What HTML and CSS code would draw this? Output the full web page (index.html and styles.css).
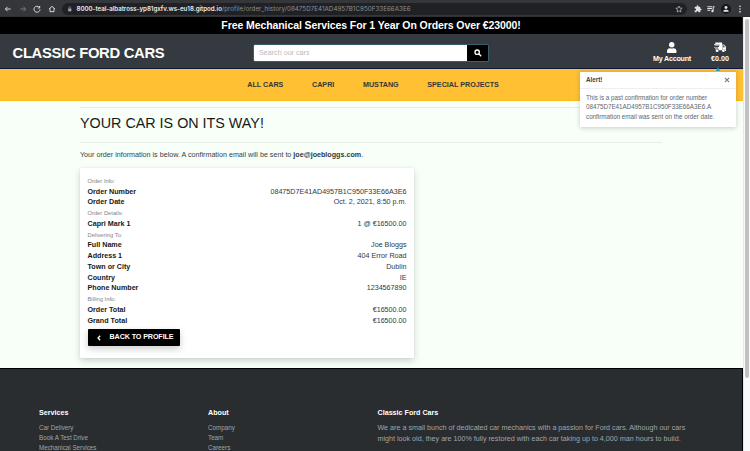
FILE: index.html
```html
<!DOCTYPE html>
<html lang="en">
<head>
<meta charset="utf-8">
<title>Classic Ford Cars</title>
<link rel="stylesheet" href="styles.css">
</head>
<body>
<div class="chrome">
  <svg class="ic" viewBox="0 0 24 24"><path d="M20 12H5M11 5l-7 7 7 7"/></svg>
  <svg class="ic dim" viewBox="0 0 24 24"><path d="M4 12h15M13 5l7 7-7 7"/></svg>
  <svg class="ic" viewBox="0 0 24 24"><path d="M19 7a9 9 0 1 0 2 6M20 3v6h-6"/></svg>
  <svg class="ic" viewBox="0 0 24 24"><path d="M3 12l9-8 9 8M6 10v10h12V10"/></svg>
  <div class="omni">
    <svg class="lock" viewBox="0 0 24 24"><path d="M5 10h14v12H5z" fill="#a4a7ab"/><path d="M8 10V6a4 4 0 0 1 8 0v4" fill="none" stroke="#a4a7ab" stroke-width="2.5"/></svg>
    <span class="url"><b>8000-teal-albatross-yp81gxfv.ws-eu18.gitpod.io</b><span>/profile/order_history/08475D7E41AD4957B1C950F33E66A3E6</span></span>
    <svg class="star" viewBox="0 0 24 24"><path d="M12 3l2.7 6.2 6.8.6-5.200 4.500 1.600 6.700L12 17.400 6.100 21l1.600-6.700-5.200-4.500 6.800-.6z"/></svg>
  </div>
  <div class="tools">
    <svg viewBox="0 0 24 24"><path d="M20.500 11H19V7a2 2 0 0 0-2-2h-4V3.500a2.500 2.500 0 0 0-5 0V5H4a2 2 0 0 0-2 2v3.800h1.500a2.700 2.700 0 0 1 0 5.400H2V20a2 2 0 0 0 2 2h3.800v-1.500a2.700 2.700 0 0 1 5.400 0V22H17a2 2 0 0 0 2-2v-4h1.500a2.500 2.500 0 0 0 0-5z"/></svg>
    <svg viewBox="0 0 24 24"><path d="M1 4h14v3H1zM1 9h14v3H1zM1 14h9v3H1zM17 4h6v3h-3v11a3.500 3.500 0 1 1-3-3.400z"/></svg>
    <svg class="avatar" viewBox="0 0 24 24"><circle cx="12" cy="7" r="5"/><path d="M2 21c0-9 20-9 20 0z"/></svg>
    <svg viewBox="0 0 24 24"><circle cx="12" cy="4" r="2.500"/><circle cx="12" cy="12" r="2.500"/><circle cx="12" cy="20" r="2.500"/></svg>
  </div>
</div>
<div class="view">
  <div class="page">
    <div class="banner">Free Mechanical Services For 1 Year On Orders Over €23000!</div>
    <header>
      <div class="brand">CLASSIC FORD CARS</div>
      <div class="search"><div class="field">Search our cars</div><div class="go"><svg viewBox="0 0 24 24"><circle cx="9.500" cy="9.500" r="6.500"/><path d="M14.500 14.500l7 7"/></svg></div></div>
      <div class="user">
        <svg viewBox="0 0 448 512"><path d="M224 256a128 128 0 1 0 0-256 128 128 0 0 0 0 256zm90 32h-17a174 174 0 0 1-146 0h-17C60 288 0 348 0 422v42c0 27 21 48 48 48h352c27 0 48-21 48-48v-42c0-74-60-134-134-134z"/></svg>
        <span>My Account</span>
      </div>
      <div class="cart">
        <svg viewBox="0 0 640 512"><path d="M64 0h352v400H256a96 96 0 0 0-192 0V288h150v-32H0v-32h250v-40H30v-32h256v-40H0V72h64zM432 96h70l106 110v178h32v48h-64a96 96 0 0 0-144-70zM464 140v100h104l-84-100z" fill-rule="evenodd"/><circle cx="160" cy="420" r="72"/><circle cx="480" cy="420" r="72"/></svg>
        <span>€0.00</span>
      </div>
    </header>
    <nav><span>ALL CARS</span><span>CAPRI</span><span>MUSTANG</span><span>SPECIAL PROJECTS</span></nav>
    <main>
      <h2>YOUR CAR IS ON ITS WAY!</h2>
      <p class="lead">Your order information is below. A confirmation email will be sent to <b>joe@joebloggs.com</b>.</p>
      <div class="card">
        <small>Order Info:</small>
        <div class="row"><b>Order Number</b><span>08475D7E41AD4957B1C950F33E66A3E6</span></div>
        <div class="row"><b>Order Date</b><span>Oct. 2, 2021, 8:50 p.m.</span></div>
        <small>Order Details:</small>
        <div class="row"><b>Capri Mark 1</b><span>1 @ €16500.00</span></div>
        <small>Delivering To:</small>
        <div class="row"><b>Full Name</b><span>Joe Bloggs</span></div>
        <div class="row"><b>Address 1</b><span>404 Error Road</span></div>
        <div class="row"><b>Town or City</b><span>Dublin</span></div>
        <div class="row"><b>Country</b><span>IE</span></div>
        <div class="row"><b>Phone Number</b><span>1234567890</span></div>
        <small>Billing Info:</small>
        <div class="row"><b>Order Total</b><span>€16500.00</span></div>
        <div class="row"><b>Grand Total</b><span>€16500.00</span></div>
        <div class="back"><svg viewBox="0 0 10 16"><path d="M8 2L2.500 8 8 14"/></svg><span>BACK TO PROFILE</span></div>
      </div>
    </main>
    <footer>
      <div><h5>Services</h5><span>Car Delivery</span><span>Book A Test Drive</span><span>Mechanical Services</span></div>
      <div><h5>About</h5><span>Company</span><span>Team</span><span>Careers</span></div>
      <div><h5>Classic Ford Cars</h5><p>We are a small bunch of dedicated car mechanics with a passion for Ford cars. Although our cars<br>might look old, they are 100% fully restored with each car taking up to 4,000 man hours to build.</p></div>
    </footer>
    <div class="toast">
      <div class="toast-head"><b>Alert!</b><svg viewBox="0 0 10 10"><path d="M1.500 1.500l7 7M8.500 1.500l-7 7"/></svg></div>
      <div class="toast-body">This is a past confirmation for order number<br>08475D7E41AD4957B1C950F33E66A3E6.A<br>confirmation email was sent on the order date.</div>
    </div>
  </div>
  <div class="scroll"><div class="thumb"></div></div>
</div>
</body>
</html>
```
FILE: styles.css
```css
* { box-sizing: border-box; }
html, body { margin: 0; height: 451px; overflow: hidden; }
body { font: 7.170px/10.750px "Liberation Sans", Arial, sans-serif; color: #3a3f43; background: #f7fff8; white-space: nowrap; }
svg { display: block; flex: none; }

.chrome { height: 17px; background: #35363a; display: flex; align-items: center; padding: 1px 0 0 4px; border-bottom: 1px solid #303135; }
.ic { width: 8px; height: 8px; margin-right: 6.500px; fill: none; stroke: #dee1e6; stroke-width: 2.800; }
.dim { stroke: #7b7d81; }
.omni { flex: none; width: 625px; height: 12px; border-radius: 6px; background: #202124; display: flex; align-items: center; padding: 0 4px 0 5px; }
.lock { width: 5.500px; height: 6px; margin-right: 4px; }
.url { flex: 1; font: 6.200px/12px Inter, sans-serif; color: #8d9095; display: flex; }
.url b { font-weight: 600; letter-spacing: -.03px; color: #e8eaed; }
.url span { letter-spacing: .06px; }
.star { width: 8px; height: 8px; fill: none; stroke: #c8cacd; stroke-width: 2; }
.tools { flex: 1; display: flex; align-items: center; justify-content: space-between; padding: 0 6px 0 6.500px; }
.tools svg { width: 8px; height: 8px; fill: #dee1e6; }
.tools .avatar { width: 10px; height: 10px; padding: 1.500px; border-radius: 5px; background: #17181b; }

.view { display: flex; height: 434px; }
.page { width: 743px; height: 434px; position: relative; display: flex; flex-direction: column; }
.scroll { width: 7px; background: #fafafa; border-left: 1px solid #e8e8e8; padding: 2px 1px 0; }
.thumb { height: 359px; width: 4px; border-radius: 2px; background: #c1c1c1; }

.banner { height: 17px; background: #000; color: #fff; font-weight: bold; font-size: 10.500px; letter-spacing: -.09px; line-height: 16px; text-align: center; border-right: 1px solid #222; }
header { height: 35px; background: #343a40; border-bottom: 1px solid #0d1740; display: flex; color: #fff; }
.brand { width: 253px; padding-left: 12.500px; font-size: 14.800px; letter-spacing: -.3px; line-height: 39px; font-weight: bold; }
.search { width: 236px; height: 18px; margin-top: 10px; display: flex; border: 1px solid #39616d; border-radius: 2px; }
.field { flex: 1; background: #fff; color: #b5bbc0; line-height: 17px; padding-left: 5px; border-radius: 1px 0 0 1px; }
.go { width: 21px; background: #000; display: flex; align-items: center; justify-content: center; }
.go svg { width: 8px; height: 8px; fill: none; stroke: #fff; stroke-width: 4; }
.user, .cart { display: flex; flex-direction: column; align-items: center; padding-top: 8px; font-weight: bold; letter-spacing: -.25px; line-height: 10px; }
.user { width: 44px; margin-left: 161px; }
.cart { width: 24px; margin-left: 14px; letter-spacing: .05px; }
.user svg, .cart svg { height: 11px; fill: #fff; margin-bottom: 1px; }
.user svg { width: 9.500px; } .cart svg { width: 12.500px; }

nav { height: 32px; background: #ffc033; display: flex; gap: 28.700px; padding-left: 247.300px; font-weight: bold; line-height: 33px; color: #33373a; border-bottom: 1px solid #ffbb16; }

main { height: 267px; padding: 6px 81px 0 80px; }
h2 { margin: 0; height: 36px; border: solid #e6eee7; border-width: 1px 0; font-size: 14.330px; line-height: 31px; font-weight: normal; color: #17191c; }
.lead { margin: 7px 0 7px; }
.lead b { color: #33383b; }
.card { width: 334px; height: 190px; background: #fff; border-radius: 1px; padding: 8px 7.500px; box-shadow: 0 3px 7px rgba(0,0,0,.17), 0 0 1px rgba(0,0,0,.2); }
.card small { display: block; font-size: 5.730px; letter-spacing: .03px; line-height: 10.750px; color: #7c858c; }
.row { display: flex; justify-content: space-between; color: #33383b; height: 10.750px; }
.row b { color: #15181a; }
.back { margin-top: 3px; width: 92px; height: 17px; border-radius: 1px; background: #000; color: #fff; display: flex; align-items: center; padding-left: 9px; font-weight: bold; letter-spacing: -.1px; line-height: 17px; box-shadow: 0 3px 7px rgba(0,0,0,.2); }
.back svg { width: 4px; height: 6px; margin-right: 9px; fill: none; stroke: #fff; stroke-width: 3.500; }

footer { flex: 1; background: #292d30; border-top: 1px solid #000; border-right: 1px solid #000; padding: 39px 0 0 39px; display: grid; grid-template-columns: 169px 169.500px 1fr; color: #a1a4a7; overflow: hidden; }
h5 { margin: 0 0 5px; font-size: 7.170px; line-height: 10px; color: #fff; }
footer span { display: block; font-size: 6.270px; line-height: 9.800px; }
footer p { margin: 0; }

.toast { position: absolute; left: 580px; top: 54px; width: 156px; height: 56px; background: #fff; border-top: 1px solid #9fc1bd; box-shadow: 0 1px 5px rgba(0,0,0,.2); }
.toast::before { content: ""; position: absolute; right: 16px; top: -5px; border: 2px solid transparent; border-top: 0; border-bottom: 4px solid #17a2b8; }
.toast-head { height: 17px; padding: 0 6px; display: flex; align-items: center; justify-content: space-between; font-size: 6.270px; border-bottom: 1px solid #eef0f0; }
.toast-head svg { width: 6px; height: 6px; stroke: #6c757d; stroke-width: 1.700; }
.toast-body { padding: 4px 6px; font-size: 6.270px; line-height: 9.400px; color: #60666b; }
```
